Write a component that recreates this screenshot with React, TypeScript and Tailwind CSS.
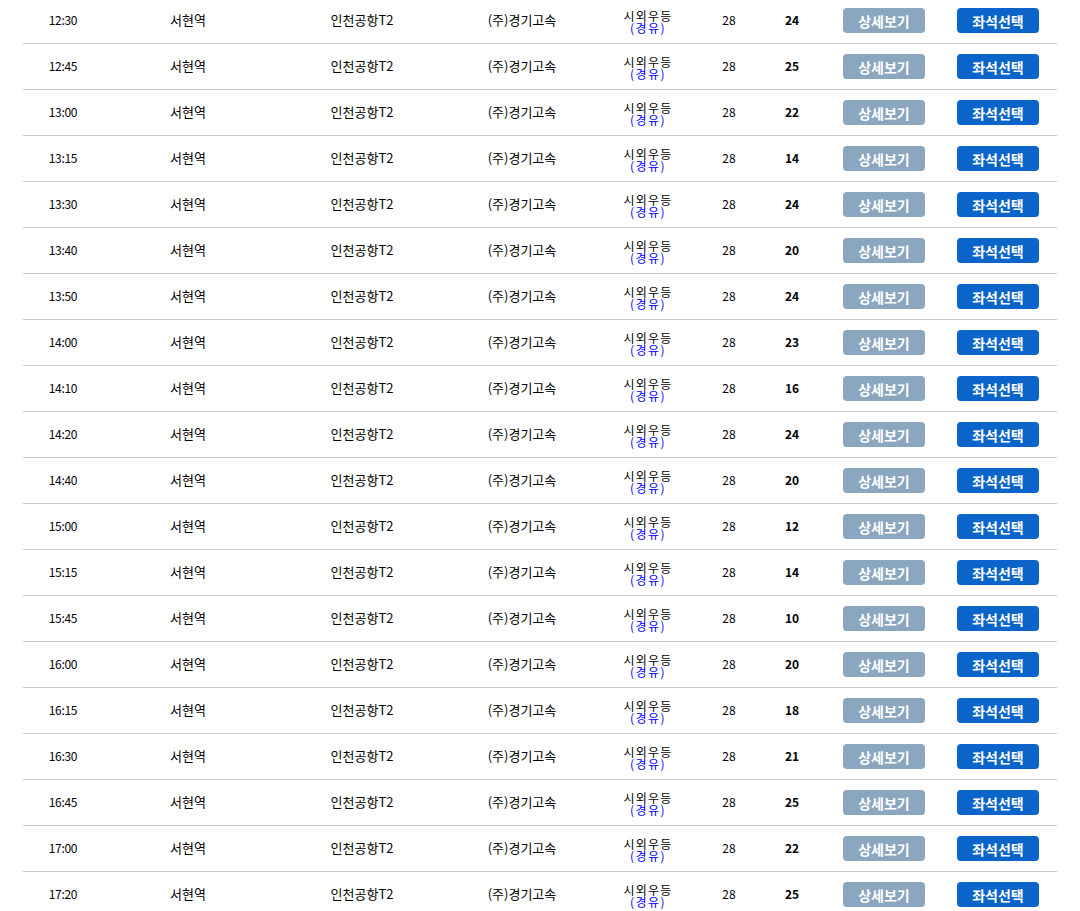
import React from "react";

const rows: [string, number][] = [
  ["12:30", 24], ["12:45", 25], ["13:00", 22], ["13:15", 14], ["13:30", 24],
  ["13:40", 20], ["13:50", 24], ["14:00", 23], ["14:10", 16], ["14:20", 24],
  ["14:40", 20], ["15:00", 12], ["15:15", 14], ["15:45", 10], ["16:00", 20],
  ["16:15", 18], ["16:30", 21], ["16:45", 25], ["17:00", 22], ["17:20", 25],
];

export default function App() {
  return (
    <div
      className="bg-white min-h-screen text-black overflow-hidden"
      style={{ fontFamily: '"Noto Sans CJK KR", "Noto Sans", sans-serif' }}
    >
      <div className="ml-[23px] w-[1034px] -mt-[2px]">
        {rows.map(([t, seats], i) => (
          <div key={i} className="flex items-center h-[46px] pb-[2px] border-b border-[#cccccc]">
            <div className="w-[80px] text-center text-[12px] tracking-[-0.3px]">{t}</div>
            <div className="w-[170px] text-center text-[13px]">서현역</div>
            <div className="w-[178px] text-center text-[13px]">인천공항T2</div>
            <div className="w-[142px] text-center text-[13px]">(주)경기고속</div>
            <div className="w-[110px] flex flex-col items-center pt-[4px]">
              <span className="block text-[12px] leading-[12px] tracking-[1.2px]">시외우등</span>
              <span className="block text-[12px] leading-[12px] text-[#0000ff] tracking-[1.5px]">(경유)</span>
            </div>
            <div className="w-[52px] text-center text-[12px]">28</div>
            <div className="w-[74px] text-center text-[12px] font-bold">{seats}</div>
            <div className="w-[110px] flex justify-center">
              <button className="w-[82px] h-[25px] mt-[2px] rounded-[4px] bg-[#8ba6bf] text-white text-[14px] font-bold leading-none">
                상세보기
              </button>
            </div>
            <div className="w-[118px] flex justify-center">
              <button className="w-[82px] h-[25px] mt-[2px] rounded-[4px] bg-[#0a64c9] text-white text-[14px] font-bold leading-none">
                좌석선택
              </button>
            </div>
          </div>
        ))}
      </div>
    </div>
  );
}
